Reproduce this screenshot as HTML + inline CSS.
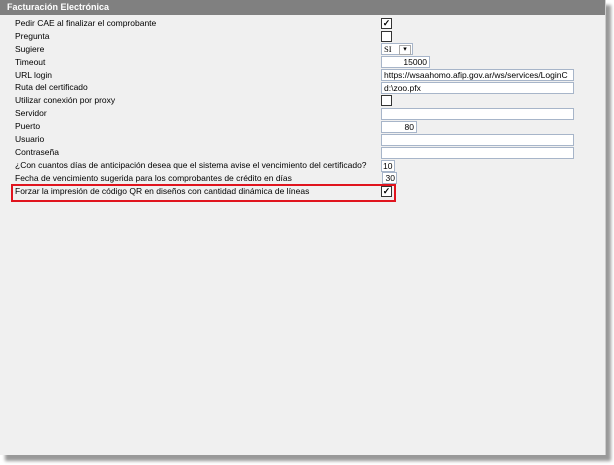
<!DOCTYPE html><html><head><style>
body{margin:0;width:614px;height:465px;background:#fff;font-family:Tahoma,"Liberation Sans",sans-serif;font-size:8.5px;color:#000;position:relative;overflow:hidden}
#sh{position:absolute;left:5px;top:5px;width:606px;height:456px;background:#999;filter:blur(1.5px)}
#p{position:absolute;left:0;top:0;width:605px;height:455px;background:#f0f0f0;border-right:1px solid #ccc}
#h{position:absolute;left:0;top:0;width:605px;height:15px;background:#808080;color:#fff;font-weight:bold;font-size:9px;line-height:15px;padding-left:7px;box-sizing:border-box}
.l{position:absolute;left:15px;height:13px;line-height:13px;white-space:nowrap}
.c{position:absolute;box-sizing:border-box;background:#fff;border:1px solid #a7b5c9;height:12px;line-height:10px;font-size:8.5px;padding:0 2px}
.cb{position:absolute;left:381px;width:11px;height:11px;box-sizing:border-box;border:1px solid #333;background:#fff;font-size:9px;line-height:9px;text-align:center;font-weight:bold}
#r{position:absolute;left:11px;top:184px;width:385px;height:18px;box-sizing:border-box;border:2px solid #e0141e}
</style></head><body>
<div id="sh"></div><div id="p"></div>
<div id="h">Facturación Electrónica</div>
<div class="l" style="top:17px">Pedir CAE al finalizar el comprobante</div>
<div class="l" style="top:30px">Pregunta</div>
<div class="l" style="top:43px">Sugiere</div>
<div class="l" style="top:56px">Timeout</div>
<div class="l" style="top:69px">URL login</div>
<div class="l" style="top:81px">Ruta del certificado</div>
<div class="l" style="top:94px">Utilizar conexión por proxy</div>
<div class="l" style="top:107px">Servidor</div>
<div class="l" style="top:120px">Puerto</div>
<div class="l" style="top:133px">Usuario</div>
<div class="l" style="top:146px">Contraseña</div>
<div class="l" style="top:159px">¿Con cuantos días de anticipación desea que el sistema avise el vencimiento del certificado?</div>
<div class="l" style="top:172px">Fecha de vencimiento sugerida para los comprobantes de crédito en días</div>
<div class="l" style="top:185px">Forzar la impresión de código QR en diseños con cantidad dinámica de líneas</div>
<div class="cb" style="top:18px">✓</div>
<div class="cb" style="top:31px"></div>
<div class="c" style="left:381px;top:43px;width:32px;font-family:'Liberation Serif',serif">SI <span style="position:absolute;right:1px;top:1px;width:10px;height:8px;border:1px solid #aaa;font-size:7px;line-height:7px;text-align:center">▾</span></div>
<div class="c" style="left:381px;top:56px;width:49px;text-align:right">15000</div>
<div class="c" style="left:381px;top:69px;width:193px;overflow:hidden;white-space:nowrap">https://wsaahomo.afip.gov.ar/ws/services/LoginC</div>
<div class="c" style="left:381px;top:82px;width:193px">d:\zoo.pfx</div>
<div class="cb" style="top:95px"></div>
<div class="c" style="left:381px;top:108px;width:193px"></div>
<div class="c" style="left:381px;top:121px;width:36px;text-align:right">80</div>
<div class="c" style="left:381px;top:134px;width:193px"></div>
<div class="c" style="left:381px;top:147px;width:193px"></div>
<div class="c" style="left:381px;top:160px;width:14px;padding:0 1px">10</div>
<div class="c" style="left:382px;top:172px;width:15px;padding:0 1px;text-align:right">30</div>
<div class="cb" style="top:186px">✓</div>
<div id="r"></div>
</body></html>
